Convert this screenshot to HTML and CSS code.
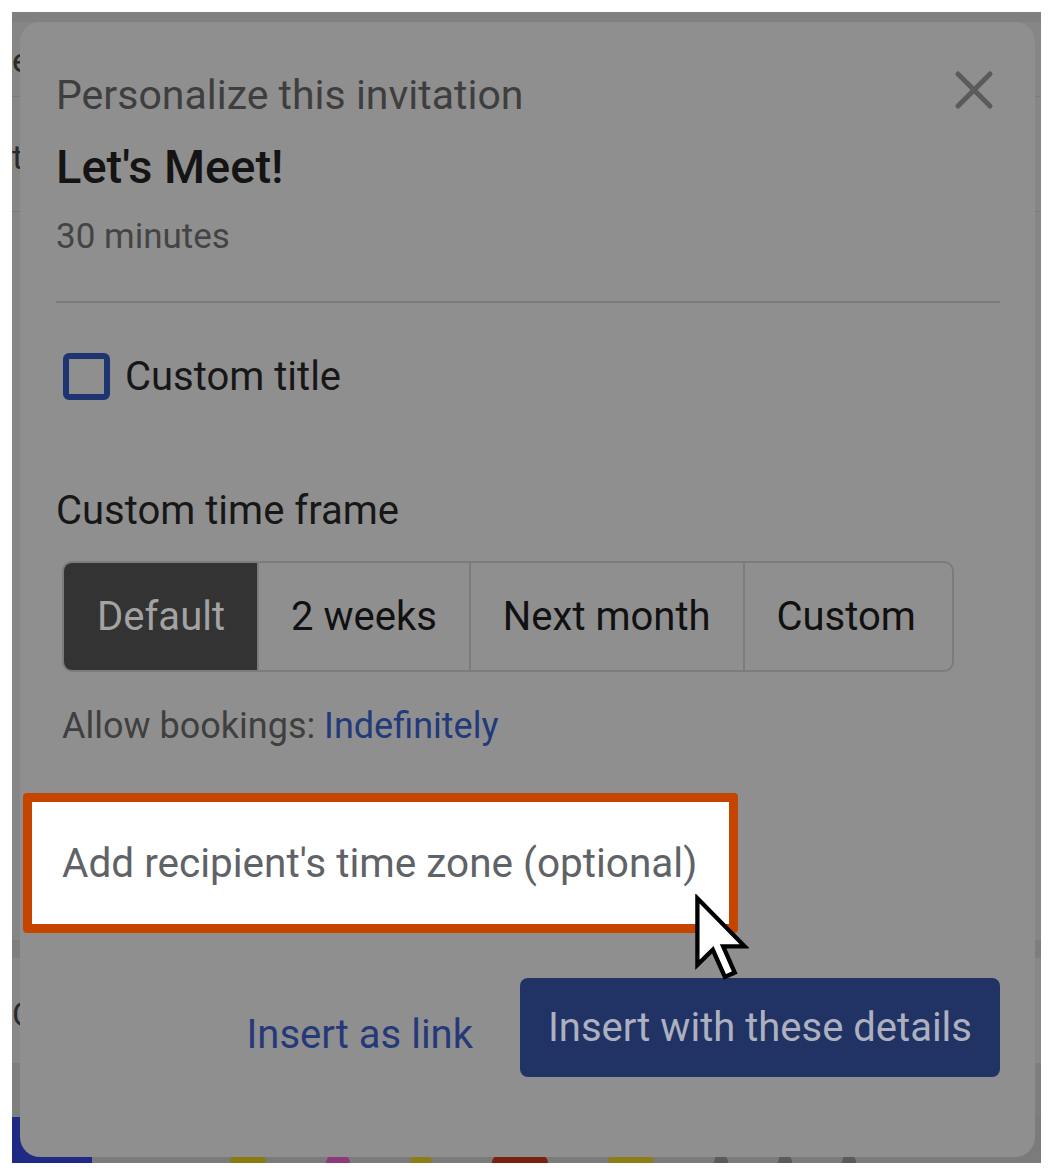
FILE: index.html
```html
<!DOCTYPE html>
<html lang="en">
<head>
    <meta charset="UTF-8">
    <meta name="viewport" content="width=device-width, initial-scale=1.0">
    <title>Personalize this invitation</title>
    <link rel="stylesheet" href="styles.css">
</head>
<body>
    <div class="screen">
        <!-- page behind the modal -->
        <div class="page">
            <div class="page-row row-a"><span>e</span></div>
            <div class="page-row row-b"><span>t</span></div>
            <div class="page-fill"></div>
            <div class="page-band"></div>
            <div class="page-row row-c"><span>C</span></div>
            <div class="page-band band-b"></div>
            <div class="dock">
                <div class="dock-btn"></div>
                <i class="dock-ico yellow"></i>
                <i class="dock-ico pink"></i>
                <i class="dock-ico gold"></i>
                <i class="dock-ico red"></i>
                <i class="dock-ico amber"></i>
                <i class="dock-ico grey"></i>
                <i class="dock-ico grey"></i>
                <i class="dock-ico grey"></i>
            </div>
        </div>

        <div class="dialog">
            <div class="dialog-head">
                <h2 class="dialog-title">Personalize this invitation</h2>
                <button class="close-btn" aria-label="Close">
                    <svg width="40" height="40" viewBox="0 0 40 40">
                        <path d="M4 4 L36 36 M36 4 L4 36" stroke="#5b5b5b" stroke-width="5" stroke-linecap="round" fill="none"/>
                    </svg>
                </button>
            </div>
            <div class="event-name">Let's Meet!</div>
            <div class="event-len">30 minutes</div>
            <hr class="divider">

            <label class="check-row">
                <span class="checkbox"></span>
                <span>Custom title</span>
            </label>

            <div class="section-label">Custom time frame</div>
            <div class="segments">
                <div class="seg active">Default</div>
                <div class="seg">2 weeks</div>
                <div class="seg">Next month</div>
                <div class="seg">Custom</div>
            </div>
            <div class="bookings">Allow bookings: <a href="#" class="link">Indefinitely</a></div>

            <div class="highlight">
                <span>Add recipient's time zone (optional)</span>
            </div>

            <div class="footer">
                <a href="#" class="link-btn">Insert as link</a>
                <button class="primary-btn">Insert with these details</button>
            </div>
        </div>

        <svg class="cursor" width="56" height="88" viewBox="0 0 13 20.5">
            <path d="M1 1 L1 16.5 L4.6 13 L7.4 19.3 L9.7 18.3 L7 12.2 L12 12.2 Z" fill="#fff" stroke="#000" stroke-width="1" stroke-linejoin="miter"/>
        </svg>
    </div>
</body>
</html>
```

FILE: styles.css
```css
*{
    margin: 0;
    padding: 0;
    box-sizing: border-box;
}
body{
    background-color: #fff;
    font-family: Roboto, "Liberation Sans", sans-serif;
}
.screen{
    position: relative;
    width: 1029px;
    height: 1151px;
    margin: 12px 0 0 12px;
    background-color: #868686;
    overflow: hidden;
}

/* page behind */
.page{
    display: flex;
    flex-direction: column;
    height: 100%;
}
.page-row{
    color: #2a2a2a;
    font-size: 34px;
    border-bottom: 1px solid #7a7a7a;
}
.row-a{
    height: 85px;
    padding-top: 18px;
    border-top: 10px solid #808080;
}
.row-b{
    height: 115px;
    padding-top: 40px;
}
.page-fill{
    flex: 1;
}
.page-band{
    height: 18px;
    background-color: #7e7e7e;
}
.band-b{
    height: 54px;
}
.row-c{
    height: 105px;
    padding-top: 36px;
    border-bottom: none;
    background-color: #888;
}
.dock{
    height: 46px;
    display: flex;
    align-items: flex-end;
    background-color: #7b7b7b;
}
.dock-btn{
    width: 80px;
    height: 46px;
    background-color: #1f2a84;
    margin-right: 138px;
}
.dock-ico{
    width: 36px;
    height: 8px;
    margin-right: 60px;
    border-radius: 12px 12px 0 0;
}
.yellow{ background-color: #8a7a10; }
.pink{ background-color: #8a3a7a; width: 24px; }
.gold{ background-color: #8e7d14; width: 22px; }
.red{ background-color: #7a2010; width: 56px; }
.amber{ background-color: #8e7d14; width: 46px; }
.grey{ background-color: #5a5a5a; width: 14px; margin-right: 50px; }

/* modal */
.dialog{
    position: absolute;
    top: 10px;
    left: 8px;
    width: 1015px;
    height: 1135px;
    padding: 49px 35px 0 36px;
    background-color: #8f8f8f;
    border-radius: 20px;
    display: flex;
    flex-direction: column;
}
.dialog-head{
    display: flex;
    justify-content: space-between;
    align-items: center;
}
.dialog-title{
    font-size: 41px;
    line-height: 48px;
    font-weight: 400;
    color: #3e3e3e;
}
.close-btn{
    border: none;
    background: none;
    width: 40px;
    height: 40px;
    margin-right: 6px;
    margin-top: -10px;
}
.event-name{
    margin-top: 20px;
    font-size: 47px;
    line-height: 56px;
    font-weight: 500;
    color: #141414;
}
.event-len{
    margin-top: 21px;
    font-size: 35px;
    line-height: 42px;
    color: #444;
}
.divider{
    margin-top: 43px;
    border: none;
    height: 2px;
    background-color: #7b7b7b;
}
.check-row{
    margin-top: 50px;
    display: flex;
    align-items: center;
    gap: 15px;
    font-size: 40px;
    line-height: 46px;
    color: #171717;
}
.checkbox{
    width: 47px;
    height: 47px;
    margin-left: 7px;
    border: 6px solid #1f3572;
    border-radius: 6px;
}
.section-label{
    margin-top: 87px;
    font-size: 40px;
    line-height: 48px;
    color: #171717;
}
.segments{
    margin-top: 26px;
    margin-left: 6px;
    align-self: flex-start;
    display: flex;
    height: 111px;
    border: 2px solid #7c7c7c;
    border-radius: 10px;
    overflow: hidden;
}
.seg{
    display: flex;
    align-items: center;
    padding: 0 32px;
    font-size: 40px;
    color: #111;
    border-left: 2px solid #7c7c7c;
}
.seg:first-child{
    border-left: none;
    padding-left: 33px;
}
.seg:last-child{
    padding-right: 36px;
}
.seg.active{
    background-color: #333;
    color: #a3a3a3;
}
.bookings{
    margin-top: 32px;
    margin-left: 6px;
    font-size: 36px;
    line-height: 44px;
    color: #3f3f3f;
}
.link{
    color: #22397a;
    text-decoration: none;
}
.highlight{
    margin-top: 45px;
    margin-left: -33px;
    width: 715px;
    height: 140px;
    display: flex;
    align-items: center;
    padding-left: 30px;
    background-color: #fff;
    border: 9px solid #c54500;
    border-radius: 4px;
    font-size: 40.5px;
    color: #5f6368;
}
.footer{
    margin-top: 45px;
    display: flex;
    justify-content: flex-end;
    align-items: center;
    gap: 47px;
}
.link-btn{
    margin-top: 14px;
    font-size: 40px;
    color: #25397a;
    text-decoration: none;
}
.primary-btn{
    height: 99px;
    padding: 0 28px;
    border: none;
    border-radius: 8px;
    background-color: #213364;
    color: #adb1bf;
    font-family: inherit;
    font-size: 40px;
}
.cursor{
    position: absolute;
    left: 681px;
    top: 882px;
}
```
